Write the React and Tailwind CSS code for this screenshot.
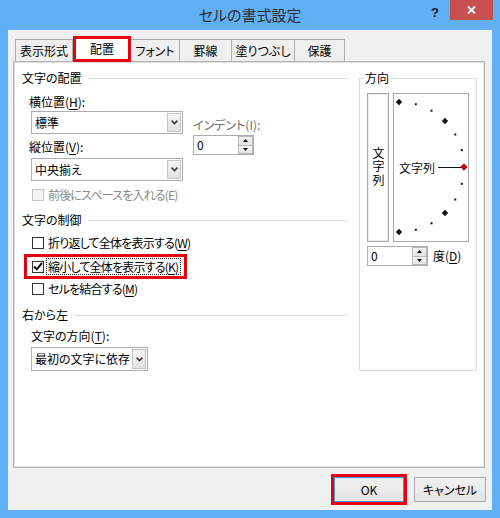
import React from 'react';

function U({ children }) {
  return <span className="underline underline-offset-[2px]">{children}</span>;
}

function SectionHeader({ children, className = '' }) {
  return (
    <div className={`flex h-[16px] items-center gap-[6px] ${className}`}>
      <span className="whitespace-nowrap">{children}</span>
      <div className="h-px flex-1 bg-[#dcdcdc]" />
    </div>
  );
}

function Dropdown({ value, className = '' }) {
  return (
    <div className={`flex border border-[#abadb3] bg-white ${className}`}>
      <div className="flex flex-1 items-center whitespace-nowrap pl-[3px]">{value}</div>
      <div className="m-px flex w-[14px] items-center justify-center border border-[#c4c4c4] bg-gradient-to-b from-[#f4f4f4] to-[#e2e2e2]">
        <svg width="7" height="5" viewBox="0 0 7 5">
          <path d="M0.6 0.6L3.5 3.6L6.4 0.6" fill="none" stroke="#3a3a3a" strokeWidth="1.6" />
        </svg>
      </div>
    </div>
  );
}

function Spinner({ className = '' }) {
  return (
    <div className={`flex h-[20px] w-[61px] border border-[#abadb3] bg-white ${className}`}>
      <div className="flex flex-1 items-center pl-[3px]">0</div>
      <div className="flex w-[15px] flex-col">
        <div className="flex flex-1 items-center justify-center border border-[#b8b8b8] bg-gradient-to-b from-[#f4f4f4] to-[#e3e3e3]">
          <svg width="5" height="3" viewBox="0 0 5 3">
            <path d="M0 3L2.5 0L5 3Z" fill="#111" />
          </svg>
        </div>
        <div className="flex flex-1 items-center justify-center border border-t-0 border-[#b8b8b8] bg-gradient-to-b from-[#f4f4f4] to-[#e3e3e3]">
          <svg width="5" height="3" viewBox="0 0 5 3">
            <path d="M0 0L2.5 3L5 0Z" fill="#111" />
          </svg>
        </div>
      </div>
    </div>
  );
}

function Box({ checked = false, disabled = false }) {
  return (
    <div
      className={`flex h-[12px] w-[12px] shrink-0 items-center justify-center border ${
        disabled ? 'border-[#c6c6c6] bg-[#f3f3f3]' : 'border-[#333333] bg-white'
      }`}
    >
      {checked && (
        <svg width="10" height="9" viewBox="0 0 10 9">
          <path d="M1 4.5L3.8 7.3L9 1" fill="none" stroke="#111" strokeWidth="2" />
        </svg>
      )}
    </div>
  );
}

function Dial() {
  const cx = 5;
  const cy = 73;
  const r = 65;
  const small = [75, 60, 30, 15, -15, -30, -60, -75];
  const big = [90, 45, -45, -90];
  const pt = (a) => [cx + r * Math.cos((a * Math.PI) / 180), cy - r * Math.sin((a * Math.PI) / 180)];
  return (
    <svg width="74" height="147" viewBox="0 0 74 147">
      {small.map((a) => {
        const [x, y] = pt(a);
        return <rect key={a} x={x - 1} y={y - 1} width="2" height="2" fill="#111" />;
      })}
      {big.map((a) => {
        const [x, y] = pt(a);
        return (
          <path key={a} d={`M${x} ${y - 3.2}L${x + 3.2} ${y}L${x} ${y + 3.2}L${x - 3.2} ${y}Z`} fill="#111" />
        );
      })}
      <text x="5" y="79" fontSize="12" fill="#111" fontFamily="Noto Sans CJK JP, sans-serif">
        文字列
      </text>
      <line x1="44" y1="73.5" x2="67" y2="73.5" stroke="#111" strokeWidth="1" />
      <path d="M70 69.8L73.2 73L70 76.2L66.8 73Z" fill="#e00000" stroke="#5a0000" strokeWidth="0.8" />
    </svg>
  );
}

export default function App() {
  return (
    <div className="flex h-[518px] w-[500px] flex-col bg-[#61b0f6] font-['Noto_Sans_CJK_JP','Noto_Sans',sans-serif] text-[12px] leading-none text-black [font-feature-settings:'palt']">
      {/* title bar */}
      <div className="grid h-[30px] grid-cols-[1fr_auto_1fr]">
        <div />
        <div className="flex items-center pb-[1px] text-[15px] text-[#2e2e2e]">セルの書式設定</div>
        <div className="flex justify-end pr-[7px]">
          <span className="mr-[11px] mt-[6px] font-['Liberation_Sans',sans-serif] text-[13px] font-bold text-[#1c1c1c]">
            ?
          </span>
          <div className="flex h-[20px] w-[43px] items-center justify-center bg-[#c75050]">
            <svg width="9" height="8" viewBox="0 0 9 8">
              <path d="M1 0.5L8 7.5M8 0.5L1 7.5" stroke="#fff" strokeWidth="1.8" />
            </svg>
          </div>
        </div>
      </div>

      {/* client */}
      <div className="mx-[8px] flex h-[480px] flex-col bg-[#f0f0f0] pl-[5px] pr-[7px]">
        {/* tabs */}
        <div className="ml-[2px] mt-[6px] flex h-[25px] items-end">
          <div className="flex h-[22px] w-[58px] items-center justify-center border-l border-r border-t border-[#acacac] bg-[#efefef]">
            表示形式
          </div>
          <div className="relative z-10 -mb-px flex h-[26px] w-[58px] items-center justify-center border-[3px] border-[#e8000f] bg-white">
            配置
          </div>
          <div className="flex h-[22px] w-[49px] items-center justify-center border-r border-t border-[#acacac] bg-[#efefef]">
            フォント
          </div>
          <div className="flex h-[22px] w-[52px] items-center justify-center border-r border-t border-[#acacac] bg-[#efefef]">
            罫線
          </div>
          <div className="flex h-[22px] w-[63px] items-center justify-center border-r border-t border-[#acacac] bg-[#efefef]">
            塗りつぶし
          </div>
          <div className="flex h-[22px] w-[50px] items-center justify-center border-r border-t border-[#acacac] bg-[#efefef]">
            保護
          </div>
        </div>

        {/* panel */}
        <div className="h-[407px] border border-[#b4b4b4] bg-white shadow-[inset_0_0_0_1px_#e0e0e0]">
          <div className="flex pl-[8px] pt-[8px]">
            {/* left column */}
            <div className="flex w-[326px] flex-col">
              <SectionHeader>文字の配置</SectionHeader>
              <div className="mt-[8px] flex">
                <div className="flex flex-col">
                  <div className="ml-[7px] flex h-[16px] items-center">
                    横位置(<U>H</U>):
                  </div>
                  <Dropdown value="標準" className="ml-[9px] mt-[1px] h-[23px] w-[152px]" />
                  <div className="ml-[7px] mt-[5px] flex h-[16px] items-center">
                    縦位置(<U>V</U>):
                  </div>
                  <Dropdown value="中央揃え" className="ml-[9px] mt-[3px] h-[23px] w-[152px]" />
                </div>
                <div className="ml-[10px] mt-[23px] flex flex-col">
                  <div className="flex h-[16px] items-center whitespace-nowrap text-[#6d6d6d]">インデント(I):</div>
                  <Spinner className="mt-[2px]" />
                </div>
              </div>
              <div className="ml-[10px] mt-[6px] flex h-[16px] items-center gap-[4px] tracking-[-0.8px] text-[#8a8a8a]">
                <Box disabled />
                <span className="whitespace-nowrap">前後にスペースを入れる(E)</span>
              </div>

              <SectionHeader className="mt-[9px]">文字の制御</SectionHeader>
              <div className="ml-[10px] mt-[7px] flex h-[16px] items-center gap-[4px] tracking-[-0.8px]">
                <Box />
                <span className="whitespace-nowrap">
                  折り返して全体を表示する(<U>W</U>)
                </span>
              </div>
              <div className="ml-[2px] mt-[3px] flex h-[25px] w-fit items-center gap-[2px] border-[3px] border-[#e8000f] pl-[5px] pr-[3px] tracking-[-0.8px]">
                <Box checked />
                <span className="block whitespace-nowrap border border-dotted border-[#222] pl-px pr-[2px] leading-[15px]">
                  縮小して全体を表示する(<U>K</U>)
                </span>
              </div>
              <div className="ml-[10px] mt-[2px] flex h-[16px] items-center gap-[4px] tracking-[-0.8px]">
                <Box />
                <span className="whitespace-nowrap">
                  セルを結合する(<U>M</U>)
                </span>
              </div>

              <SectionHeader className="mt-[10px]">右から左</SectionHeader>
              <div className="ml-[9px] mt-[5px] flex h-[16px] items-center">
                文字の方向(<U>T</U>):
              </div>
              <Dropdown value="最初の文字に依存" className="ml-[9px] mt-[3px] h-[24px] w-[117px]" />
            </div>

            {/* orientation */}
            <fieldset className="ml-[11px] w-[118px] border border-[#dcdcdc] px-[7px] pb-[6px] pt-[7px]">
              <legend className="-ml-[3px] h-[16px] px-[1px] leading-[16px]">方向</legend>
              <div className="flex gap-[4px]">
                <div className="flex h-[149px] w-[22px] items-center justify-center border border-[#a9a9a9] shadow-[inset_0_0_0_1px_#ececec]">
                  <span className="leading-[12px] tracking-[1.5px] [writing-mode:vertical-rl]">文字列</span>
                </div>
                <div className="h-[149px] w-[76px] border border-[#a9a9a9]">
                  <Dial />
                </div>
              </div>
              <div className="mt-[4px] flex items-center">
                <Spinner />
                <span className="ml-[5px] whitespace-nowrap">
                  度(<U>D</U>)
                </span>
              </div>
            </fieldset>
          </div>
        </div>

        {/* buttons */}
        <div className="-mr-px mt-[6px] flex items-center justify-end gap-[7px]">
          <div className="border-[3px] border-[#e8000f]">
            <div className="flex h-[25px] w-[70px] items-center justify-center border border-[#3c9ce0] bg-gradient-to-b from-[#f1f1f1] to-[#e4e4e4]">
              OK
            </div>
          </div>
          <div className="flex h-[25px] w-[72px] items-center justify-center border border-[#acacac] bg-gradient-to-b from-[#f1f1f1] to-[#e4e4e4]">
            キャンセル
          </div>
        </div>
      </div>
    </div>
  );
}
